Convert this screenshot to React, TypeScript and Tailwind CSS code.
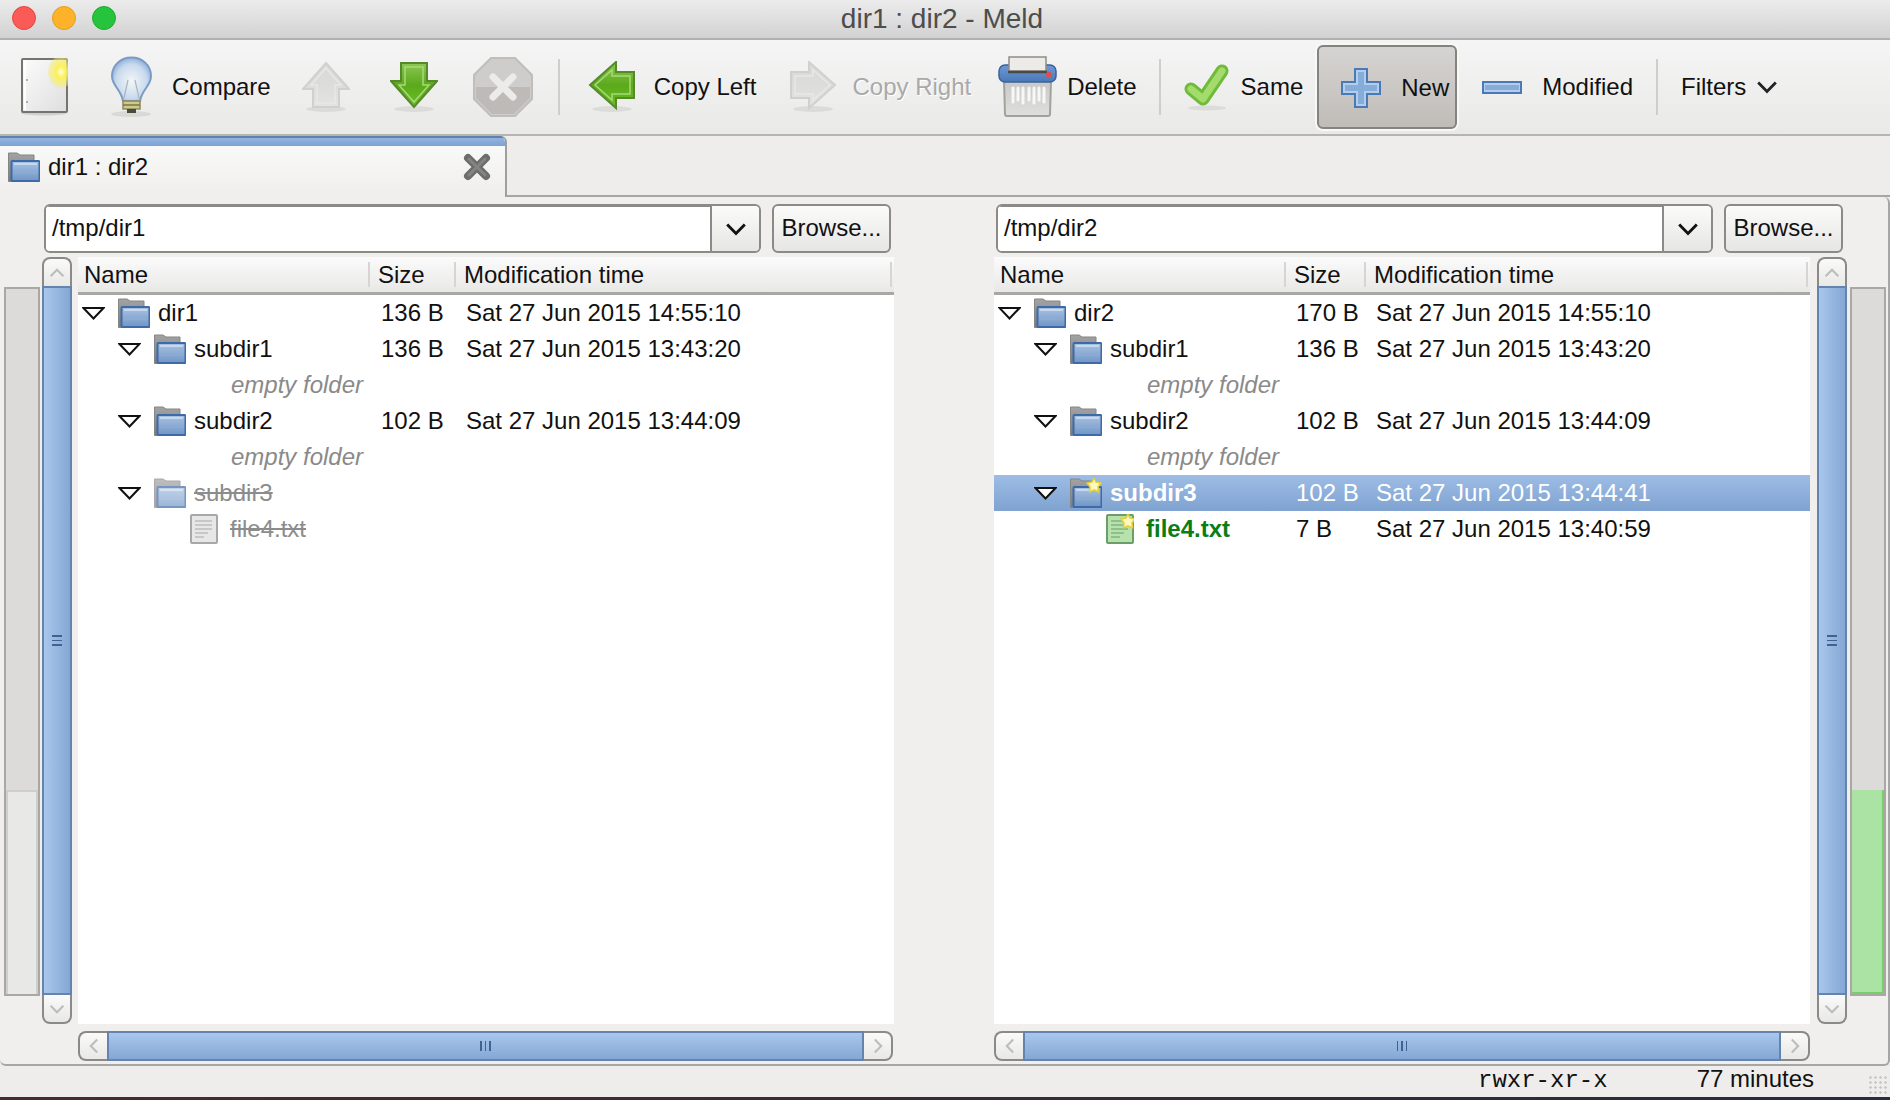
import React from 'react';

type Row = {
  level: number;
  name: string;
  size?: string;
  time?: string;
  kind: 'folder' | 'file' | 'note';
  state?: 'normal' | 'gone' | 'new';
  selected?: boolean;
};

const leftRows: Row[] = [
  { level: 0, name: 'dir1', size: '136 B', time: 'Sat 27 Jun 2015 14:55:10', kind: 'folder' },
  { level: 1, name: 'subdir1', size: '136 B', time: 'Sat 27 Jun 2015 13:43:20', kind: 'folder' },
  { level: 2, name: 'empty folder', kind: 'note' },
  { level: 1, name: 'subdir2', size: '102 B', time: 'Sat 27 Jun 2015 13:44:09', kind: 'folder' },
  { level: 2, name: 'empty folder', kind: 'note' },
  { level: 1, name: 'subdir3', kind: 'folder', state: 'gone' },
  { level: 3, name: 'file4.txt', kind: 'file', state: 'gone' },
];

const rightRows: Row[] = [
  { level: 0, name: 'dir2', size: '170 B', time: 'Sat 27 Jun 2015 14:55:10', kind: 'folder' },
  { level: 1, name: 'subdir1', size: '136 B', time: 'Sat 27 Jun 2015 13:43:20', kind: 'folder' },
  { level: 2, name: 'empty folder', kind: 'note' },
  { level: 1, name: 'subdir2', size: '102 B', time: 'Sat 27 Jun 2015 13:44:09', kind: 'folder' },
  { level: 2, name: 'empty folder', kind: 'note' },
  { level: 1, name: 'subdir3', size: '102 B', time: 'Sat 27 Jun 2015 13:44:41', kind: 'folder', state: 'new', selected: true },
  { level: 3, name: 'file4.txt', size: '7 B', time: 'Sat 27 Jun 2015 13:40:59', kind: 'file', state: 'new' },
];

const indent = ['pl-[4px]', 'pl-[40px]', 'pl-[76px]', 'pl-[112px]'];

function Star({ x, y }: { x: number; y: number }) {
  return (
    <path
      transform={`translate(${x} ${y})`}
      d="M7 0 L9 4 L14 5 L11 9 L11.5 14 L7 12 L2.5 14 L3 9 L0 5 L5 4 Z"
      fill="#fdf7c0"
      stroke="#e2cf3a"
      strokeWidth="1.6"
      strokeLinejoin="round"
    />
  );
}

function Folder({ star, className }: { star?: boolean; className?: string }) {
  return (
    <svg width="32" height="30" viewBox="0 0 32 30" className={className}>
      <defs>
        <linearGradient id="fldBack" x1="0" y1="0" x2="0" y2="1">
          <stop offset="0" stopColor="#a3a3a3" />
          <stop offset="1" stopColor="#7c7c7c" />
        </linearGradient>
        <linearGradient id="fldFront" x1="0" y1="0" x2="0" y2="1">
          <stop offset="0" stopColor="#a9c2e2" />
          <stop offset="1" stopColor="#7196c6" />
        </linearGradient>
      </defs>
      <path d="M0.5 1 H9 L12 3 H26 V10 H4 V29.5 H0.5 Z" fill="url(#fldBack)" stroke="#858585" />
      <rect x="3.5" y="9" width="28" height="20" rx="1" fill="url(#fldFront)" stroke="#3d6aa8" strokeWidth="2" />
      <path d="M6 12 H29" stroke="#d5e2f2" strokeWidth="1.5" />
      <path d="M6 21 H29" stroke="#8eadd4" strokeWidth="1.5" />
      {star && <Star x={17} y={0} />}
    </svg>
  );
}

function FileIcon({ green, star, className }: { green?: boolean; star?: boolean; className?: string }) {
  const fill = green ? '#b8e2ad' : '#e7e7e7';
  const edge = green ? '#6a9f6a' : '#a8a8a8';
  const line = green ? '#7fb77f' : '#bdbdbd';
  return (
    <svg width="28" height="30" viewBox="0 0 28 30" className={className}>
      <rect x="1" y="1" width="26" height="28" rx="1" fill={fill} stroke={edge} strokeWidth="2" />
      <path d="M5 7 H22 M5 11 H22 M5 15 H22 M5 19 H18 M5 23 H14" stroke={line} strokeWidth="1.6" />
      {star && <Star x={15} y={0} />}
    </svg>
  );
}

function Triangle() {
  return (
    <svg width="23" height="13" viewBox="0 0 23 13" className="shrink-0">
      <path d="M1.5 1 H21.5 L11.5 11.5 Z" fill="#fff" stroke="#111" strokeWidth="2" strokeLinejoin="miter" />
    </svg>
  );
}

function NewDocIcon() {
  return (
    <svg width="47" height="58" viewBox="0 0 47 58" className="shrink-0">
      <defs>
        <linearGradient id="docFill" x1="0" y1="0" x2="1" y2="1">
          <stop offset="0" stopColor="#fcfcfc" />
          <stop offset="1" stopColor="#dedede" />
        </linearGradient>
        <radialGradient id="docGlow">
          <stop offset="0" stopColor="#fffde0" />
          <stop offset="0.35" stopColor="#fbf25a" />
          <stop offset="1" stopColor="#f6ec6a" stopOpacity="0.35" />
        </radialGradient>
      </defs>
      <ellipse cx="23" cy="55" rx="23" ry="2.5" fill="#000" opacity="0.12" />
      <rect x="1" y="1" width="45" height="53" rx="1" fill="url(#docFill)" stroke="#77746f" strokeWidth="2" />
      <path d="M4 3 V52" stroke="#fff" strokeWidth="2" />
      <circle cx="6" cy="22" r="1" fill="#999" />
      <circle cx="6" cy="44" r="1" fill="#999" />
      <ellipse cx="40" cy="14" rx="13" ry="16" fill="url(#docGlow)" />
    </svg>
  );
}

function BulbIcon() {
  return (
    <svg width="43" height="62" viewBox="0 0 43 62" className="shrink-0">
      <defs>
        <radialGradient id="bulbGlass" cx="0.5" cy="0.55" r="0.6">
          <stop offset="0" stopColor="#f3f6f6" />
          <stop offset="0.65" stopColor="#c9daee" />
          <stop offset="1" stopColor="#7fa4d6" />
        </radialGradient>
      </defs>
      <ellipse cx="21" cy="58" rx="20" ry="3" fill="#000" opacity="0.08" />
      <path
        d="M21.5 1.5 C32 1.5 41 9 41 20 C41 30 32 33 30 45 H13 C11 33 2 30 2 20 C2 9 11 1.5 21.5 1.5 Z"
        fill="url(#bulbGlass)"
        stroke="#7c9bc4"
        strokeWidth="2"
      />
      <path d="M14 42 L18 24 M29 42 L25 24" stroke="#a9b5bf" strokeWidth="1.2" fill="none" />
      <path d="M13 45 H30 V53 H13 Z" fill="#cfc98a" stroke="#8f8a5c" strokeWidth="1.5" />
      <path d="M13 49 H30" stroke="#77744c" strokeWidth="1.5" />
      <path d="M17 53 H26 V57 H17 Z" fill="#4b4a3c" />
    </svg>
  );
}

function Arrow({ dir, on }: { dir: 'up' | 'down' | 'left' | 'right'; on?: boolean }) {
  const rotate = { up: 180, down: 0, left: 90, right: -90 }[dir];
  const gid = `arrow-${dir}`;
  const shape = 'M11 2 H37 V20 H47 L24 46 L1 20 H11 Z';
  return (
    <svg width="48" height="52" viewBox="0 0 48 52" className="shrink-0">
      <defs>
        <linearGradient id={gid} x1="0" y1="0" x2="0" y2="1" gradientTransform={`rotate(${-rotate} 0.5 0.5)`}>
          <stop offset="0" stopColor={on ? '#8cc852' : '#dadbd8'} />
          <stop offset="0.5" stopColor={on ? '#5ca91c' : '#dcdddA'} />
          <stop offset="1" stopColor={on ? '#6abf20' : '#e4e5e2'} />
        </linearGradient>
      </defs>
      <ellipse cx="24" cy="48" rx="20" ry="3" fill="#000" opacity="0.07" />
      <g transform={`rotate(${rotate} 24 24)`}>
        <path d={shape} fill={`url(#${gid})`} stroke={on ? '#55892a' : '#cfd1cd'} strokeWidth="2" />
        <path
          d="M15 6 H33 V24 H39 L24 41 L9 24 H15 Z"
          fill="none"
          stroke={on ? '#a6d97a' : '#e8e9e6'}
          strokeWidth="1.5"
        />
      </g>
    </svg>
  );
}

function StopIcon() {
  return (
    <svg width="60" height="60" viewBox="0 0 60 60" className="shrink-0">
      <path d="M18 1 H42 L59 18 V42 L42 59 H18 L1 42 V18 Z" fill="#cfcdcb" stroke="#c0bebb" strokeWidth="2" />
      <path d="M3 30 H57 V41 L41 57 H19 L3 41 Z" fill="#bdbab8" />
      <path d="M20 20 L40 40 M40 20 L20 40" stroke="#ecebea" strokeWidth="7" strokeLinecap="round" />
    </svg>
  );
}

function ShredderIcon() {
  return (
    <svg width="61" height="62" viewBox="0 0 61 62" className="shrink-0">
      <defs>
        <linearGradient id="binFill" x1="0" y1="0" x2="0" y2="1">
          <stop offset="0" stopColor="#c8c8c6" />
          <stop offset="1" stopColor="#dfdfdd" />
        </linearGradient>
        <linearGradient id="lidFill" x1="0" y1="0" x2="0" y2="1">
          <stop offset="0" stopColor="#6f9ad6" />
          <stop offset="1" stopColor="#4a77b6" />
        </linearGradient>
      </defs>
      <path d="M7 25 H54 L53 58 Q53 60 51 60 H10 Q8 60 8 58 Z" fill="url(#binFill)" stroke="#a3a19c" strokeWidth="2" />
      <rect x="2" y="9" width="57" height="17" rx="6" fill="url(#lidFill)" stroke="#3c6299" strokeWidth="1.5" />
      <rect x="12" y="1" width="37" height="14" fill="#ecebe8" stroke="#8f8d88" strokeWidth="1.5" />
      <path d="M11 16 H50" stroke="#4a4a4a" strokeWidth="2.5" />
      <circle cx="52" cy="19" r="3" fill="#e24d4d" />
      <path
        d="M16 32 V46 M21 32 V44 M26 32 V47 M32 32 V44 M37 32 V47 M42 32 V44 M47 32 V46"
        stroke="#f7f7f5"
        strokeWidth="3"
        strokeLinecap="round"
      />
    </svg>
  );
}

function CheckIcon() {
  return (
    <svg width="46" height="48" viewBox="0 0 46 48" className="shrink-0">
      <ellipse cx="23" cy="45" rx="19" ry="2.5" fill="#000" opacity="0.07" />
      <path d="M7 26 L19 36 L38 8" fill="none" stroke="#70bb3a" strokeWidth="13" strokeLinecap="round" strokeLinejoin="round" />
      <path d="M7 26 L19 36 L38 8" fill="none" stroke="#a3dc6c" strokeWidth="7" strokeLinecap="round" strokeLinejoin="round" />
    </svg>
  );
}

function PlusIcon() {
  return (
    <svg width="40" height="40" viewBox="0 0 40 40" className="shrink-0">
      <path
        d="M14 1 H26 V14 H39 V26 H26 V39 H14 V26 H1 V14 H14 Z"
        fill="#b3cdec"
        stroke="#4a79b6"
        strokeWidth="2"
      />
      <path d="M17 4 H23 V17 H36 V23 H23 V36 H17 V23 H4 V17 H17 Z" fill="#86acda" />
    </svg>
  );
}

function MinusIcon() {
  return (
    <svg width="40" height="13" viewBox="0 0 40 13" className="shrink-0">
      <rect x="1" y="1" width="38" height="11" fill="#b3cdec" stroke="#4a79b6" strokeWidth="2" />
      <rect x="3" y="4" width="34" height="5" fill="#86acda" />
    </svg>
  );
}

function CloseX() {
  return (
    <svg width="28" height="28" viewBox="0 0 28 28" className="shrink-0">
      <path d="M5 5 L23 23 M23 5 L5 23" stroke="#6d6d6b" strokeWidth="8" strokeLinecap="round" />
      <path d="M6 6 L22 22 M22 6 L6 22" stroke="#848482" strokeWidth="3" strokeLinecap="round" />
    </svg>
  );
}

function Chevron({ dir, tone, size }: { dir: 'up' | 'down' | 'left' | 'right'; tone: string; size: number }) {
  const rotate = { up: 180, down: 0, left: 90, right: -90 }[dir];
  return (
    <svg width={size} height={size} viewBox="0 0 20 20" className="shrink-0">
      <path
        transform={`rotate(${rotate} 10 10)`}
        d="M2 6 L10 14 L18 6"
        fill="none"
        stroke={tone}
        strokeWidth="2.6"
      />
    </svg>
  );
}

function PathBar({ path, outer }: { path: string; outer: string }) {
  return (
    <div className={`flex h-[49px] ${outer}`}>
      <div className="flex flex-1 rounded-[6px] border-2 border-[#8c8a86] overflow-hidden">
        <div className="flex-1 bg-white flex items-center pl-[6px] pb-[2px] border-t border-[#8c8a86]">{path}</div>
        <div className="w-[49px] border-l-2 border-[#8c8a86] bg-linear-to-b from-[#fbfbfb] to-[#e6e6e4] flex items-center justify-center">
          <Chevron dir="down" tone="#111" size={22} />
        </div>
      </div>
      <div className="ml-[11px] w-[119px] rounded-[6px] border-2 border-[#8c8a86] bg-linear-to-b from-[#fbfbfb] to-[#e6e6e4] flex items-center justify-center pb-[2px]">
        Browse...
      </div>
    </div>
  );
}

function Step({ dir }: { dir: 'up' | 'down' }) {
  const shape = dir === 'up' ? 'rounded-t-[8px] border-b-0' : 'rounded-b-[8px] border-t-0';
  return (
    <div className={`h-[29px] shrink-0 border-2 border-[#8c8a86] bg-linear-to-b from-[#fafafa] to-[#e8e8e6] flex items-center justify-center ${shape}`}>
      <Chevron dir={dir} tone="#bcbcba" size={16} />
    </div>
  );
}

function VScroll() {
  return (
    <div className="w-[30px] h-[767px] flex flex-col shrink-0">
      <Step dir="up" />
      <div className="flex-1 border-2 border-[#6484ad] bg-linear-to-r from-[#a9c7ec] to-[#84a7d5] flex flex-col items-center justify-center gap-[3px]">
        <div className="w-[10px] h-[1.5px] bg-[#3f6290]" />
        <div className="w-[10px] h-[1.5px] bg-[#3f6290]" />
        <div className="w-[10px] h-[1.5px] bg-[#3f6290]" />
      </div>
      <Step dir="down" />
    </div>
  );
}

function HScroll({ outer }: { outer: string }) {
  return (
    <div className={`h-[30px] flex ${outer}`}>
      <div className="w-[29px] shrink-0 border-2 border-r-0 border-[#8c8a86] rounded-l-[8px] bg-linear-to-b from-[#fafafa] to-[#e8e8e6] flex items-center justify-center">
        <Chevron dir="left" tone="#bcbcba" size={16} />
      </div>
      <div className="flex-1 border-2 border-[#6484ad] bg-linear-to-b from-[#a9c7ec] to-[#84a7d5] flex items-center justify-center gap-[3px]">
        <div className="h-[10px] w-[1.5px] bg-[#3f6290]" />
        <div className="h-[10px] w-[1.5px] bg-[#3f6290]" />
        <div className="h-[10px] w-[1.5px] bg-[#3f6290]" />
      </div>
      <div className="w-[29px] shrink-0 border-2 border-l-0 border-[#8c8a86] rounded-r-[8px] bg-linear-to-b from-[#fafafa] to-[#e8e8e6] flex items-center justify-center">
        <Chevron dir="right" tone="#bcbcba" size={16} />
      </div>
    </div>
  );
}

function OverviewMap({ green, outer }: { green?: boolean; outer: string }) {
  return (
    <div className={`w-[36px] h-[709px] mt-[30px] shrink-0 flex flex-col border-2 border-[#a9a8a5] bg-[#dcdbd9] ${outer}`}>
      <div className="flex-1" />
      {green ? (
        <div className="h-[204px] bg-[#abe3a5] border-r-2 border-b-2 border-[#77cf6c]" />
      ) : (
        <div className="h-[204px] bg-[#e8e8e7] border-t-2 border-x-2 border-[#cfcecc]" />
      )}
    </div>
  );
}

function TreeRow({ row, nameCol, sizeCol, rootInset }: { row: Row; nameCol: string; sizeCol: string; rootInset: string }) {
  const gone = row.state === 'gone';
  const isNew = row.state === 'new';
  let nameTone = 'text-[#111]';
  if (gone) nameTone = 'text-[#8c8c8c] line-through';
  if (isNew && row.kind === 'file') nameTone = 'text-[#0a7d14] font-bold';
  if (row.selected) nameTone = 'text-white font-bold';
  const pad = row.level === 0 ? rootInset : indent[row.level];

  return (
    <div
      className={`h-[36px] flex items-center whitespace-nowrap ${
        row.selected ? 'bg-linear-to-b from-[#9dbde5] to-[#7fa2d0] text-white' : 'text-[#111]'
      }`}
    >
      <div className={`${nameCol} shrink-0 flex items-center h-full ${pad}`}>
        {row.kind === 'note' && <span className="italic text-[#8a8a8a] ml-[77px]">{row.name}</span>}
        {row.kind === 'folder' && (
          <>
            <Triangle />
            <Folder star={isNew} className={`ml-[13px] shrink-0 ${gone ? 'opacity-70' : ''}`} />
            <span className={`ml-[8px] ${nameTone}`}>{row.name}</span>
          </>
        )}
        {row.kind === 'file' && (
          <>
            <FileIcon green={isNew} star={isNew} className="shrink-0" />
            <span className={`ml-[12px] ${nameTone}`}>{row.name}</span>
          </>
        )}
      </div>
      <div className={`${sizeCol} shrink-0`}>{row.size}</div>
      <div>{row.time}</div>
    </div>
  );
}

function Tree({
  rows,
  nameCol,
  sizeCol,
  headName,
  headSize,
  rootInset,
  headInset,
}: {
  rows: Row[];
  nameCol: string;
  sizeCol: string;
  headName: string;
  headSize: string;
  rootInset: string;
  headInset: string;
}) {
  return (
    <div className="w-[816px] h-[767px] bg-white shrink-0 flex flex-col">
      <div className="h-[38px] shrink-0 flex items-center bg-linear-to-b from-[#fbfbfb] to-[#e9e8e7] border-b-[3px] border-[#a8a7a4]">
        <div className={`${headName} ${headInset} h-[25px] flex items-center border-r-2 border-[#d6d5d3] shrink-0`}>Name</div>
        <div className={`${headSize} pl-[8px] h-[25px] flex items-center border-r-2 border-[#d6d5d3] shrink-0`}>Size</div>
        <div className="flex-1 pl-[8px] h-[25px] flex items-center border-r-2 border-[#d6d5d3] mr-[2px]">Modification time</div>
      </div>
      {rows.map((row, i) => (
        <TreeRow key={i} row={row} nameCol={nameCol} sizeCol={sizeCol} rootInset={rootInset} />
      ))}
    </div>
  );
}

function Sep({ margin }: { margin: string }) {
  return <div className={`w-[2px] h-[56px] bg-[#cfcecc] shrink-0 ${margin}`} />;
}

export default function App() {
  return (
    <div className="w-[1890px] h-[1100px] overflow-hidden flex flex-col bg-[#eeedeb] text-[24px] leading-[28px] text-[#111] font-['Liberation_Sans',sans-serif]">
      {/* Title bar */}
      <div className="relative h-[40px] shrink-0 flex items-center justify-center pr-[6px] bg-linear-to-b from-[#ececec] to-[#d2d2d2] border-b-2 border-[#b1b1b1] text-[#4d4d4d] text-[28px]">
        <div className="absolute left-[12px] top-[6px] flex gap-[16px]">
          <div className="w-[24px] h-[24px] rounded-full bg-[#fb5b57] border border-[#e5463f]" />
          <div className="w-[24px] h-[24px] rounded-full bg-[#fdb229] border border-[#e39f20]" />
          <div className="w-[24px] h-[24px] rounded-full bg-[#26c43c] border border-[#1eab2f]" />
        </div>
        dir1 : dir2 - Meld
      </div>

      {/* Toolbar */}
      <div className="h-[96px] shrink-0 flex items-center pl-[21px] bg-linear-to-b from-[#f5f5f5] to-[#e9e9e8] border-b-2 border-[#b5b4b1]">
        <NewDocIcon />
        <div className="ml-[42px]"><BulbIcon /></div>
        <span className="ml-[19px]">Compare</span>
        <div className="ml-[31px]"><Arrow dir="up" /></div>
        <div className="ml-[40px]"><Arrow dir="down" on /></div>
        <div className="ml-[35px]"><StopIcon /></div>
        <Sep margin="ml-[25px]" />
        <div className="ml-[28px]"><Arrow dir="left" on /></div>
        <span className="ml-[18px]">Copy Left</span>
        <div className="ml-[33px]"><Arrow dir="right" /></div>
        <span className="ml-[15px] text-[#a9a9a9] [text-shadow:1px_1px_0_#fff]">Copy Right</span>
        <div className="ml-[26px]"><ShredderIcon /></div>
        <span className="ml-[9px]">Delete</span>
        <Sep margin="ml-[22px]" />
        <div className="ml-[23px]"><CheckIcon /></div>
        <span className="ml-[11px]">Same</span>
        <div className="ml-[14px] w-[140px] h-[84px] rounded-[6px] border-2 border-[#86837f] bg-linear-to-b from-[#d6d4d2] to-[#bfbcb8] flex items-center pl-[22px] pt-[2px] shadow-[0_0_0_2px_#f8f8f8]">
          <PlusIcon />
          <span className="ml-[20px]">New</span>
        </div>
        <div className="ml-[25px]"><MinusIcon /></div>
        <span className="ml-[20px]">Modified</span>
        <Sep margin="ml-[23px]" />
        <span className="ml-[23px]">Filters</span>
        <div className="ml-[10px]"><Chevron dir="down" tone="#222" size={22} /></div>
      </div>

      {/* Tab strip */}
      <div className="h-[61px] shrink-0 flex">
        <div className="w-[507px] flex flex-col border-r-2 border-[#a09f9c] rounded-tr-[6px] overflow-hidden bg-linear-to-b from-[#fbfbfb] to-[#efeeec]">
          <div className="h-[10px] shrink-0 border-t-2 border-[#5f82ad] bg-linear-to-b from-[#92b3de] to-[#7ea3d3]" />
          <div className="flex-1 flex items-center pl-[8px] pr-[14px] pb-[9px]">
            <Folder />
            <span className="ml-[8px]">dir1 : dir2</span>
            <div className="ml-auto"><CloseX /></div>
          </div>
        </div>
        <div className="flex-1 border-b-2 border-[#a7a6a3]" />
      </div>

      {/* Compare panes */}
      <div className="h-[869px] shrink-0 flex bg-[#f0efed] border-b-2 border-r-2 border-[#a7a6a3] rounded-b-[6px] rounded-tr-[6px]">
        <div className="w-[942px] shrink-0 flex flex-col pt-[7px]">
          <PathBar path="/tmp/dir1" outer="ml-[44px] w-[847px]" />
          <div className="flex mt-[4px]">
            <OverviewMap outer="ml-[4px]" />
            <div className="ml-[2px]"><VScroll /></div>
            <div className="ml-[6px]">
              <Tree
                rows={leftRows}
                nameCol="w-[303px]"
                sizeCol="w-[85px]"
                headName="w-[292px]"
                headSize="w-[86px]"
                rootInset="pl-[4px]"
                headInset="pl-[6px]"
              />
            </div>
          </div>
          <HScroll outer="mt-[7px] ml-[78px] w-[815px]" />
        </div>
        <div className="flex-1 flex flex-col pt-[7px] pl-[52px]">
          <PathBar path="/tmp/dir2" outer="ml-[2px] w-[847px]" />
          <div className="flex mt-[4px]">
            <Tree
              rows={rightRows}
              nameCol="w-[302px]"
              sizeCol="w-[80px]"
              headName="w-[292px]"
              headSize="w-[80px]"
              rootInset="pl-[4px]"
              headInset="pl-[6px]"
            />
            <div className="ml-[7px]"><VScroll /></div>
            <OverviewMap green outer="ml-[3px]" />
          </div>
          <HScroll outer="mt-[7px] w-[816px]" />
        </div>
      </div>

      {/* Status bar */}
      <div className="relative h-[31px] shrink-0 flex items-center">
        <span className="ml-[1478px] -mt-[2px] font-['Liberation_Mono',monospace]">rwxr-xr-x</span>
        <span className="ml-[89px] -mt-[5px]">77 minutes</span>
        <div className="absolute right-[2px] bottom-[2px] w-[20px] h-[20px] bg-[radial-gradient(#c9c8c6_1px,transparent_1.5px)] bg-size-[5px_5px]" />
      </div>
      <div className="h-[3px] shrink-0 bg-linear-to-r from-[#4a2a2c] to-[#262b3d]" />
    </div>
  );
}
